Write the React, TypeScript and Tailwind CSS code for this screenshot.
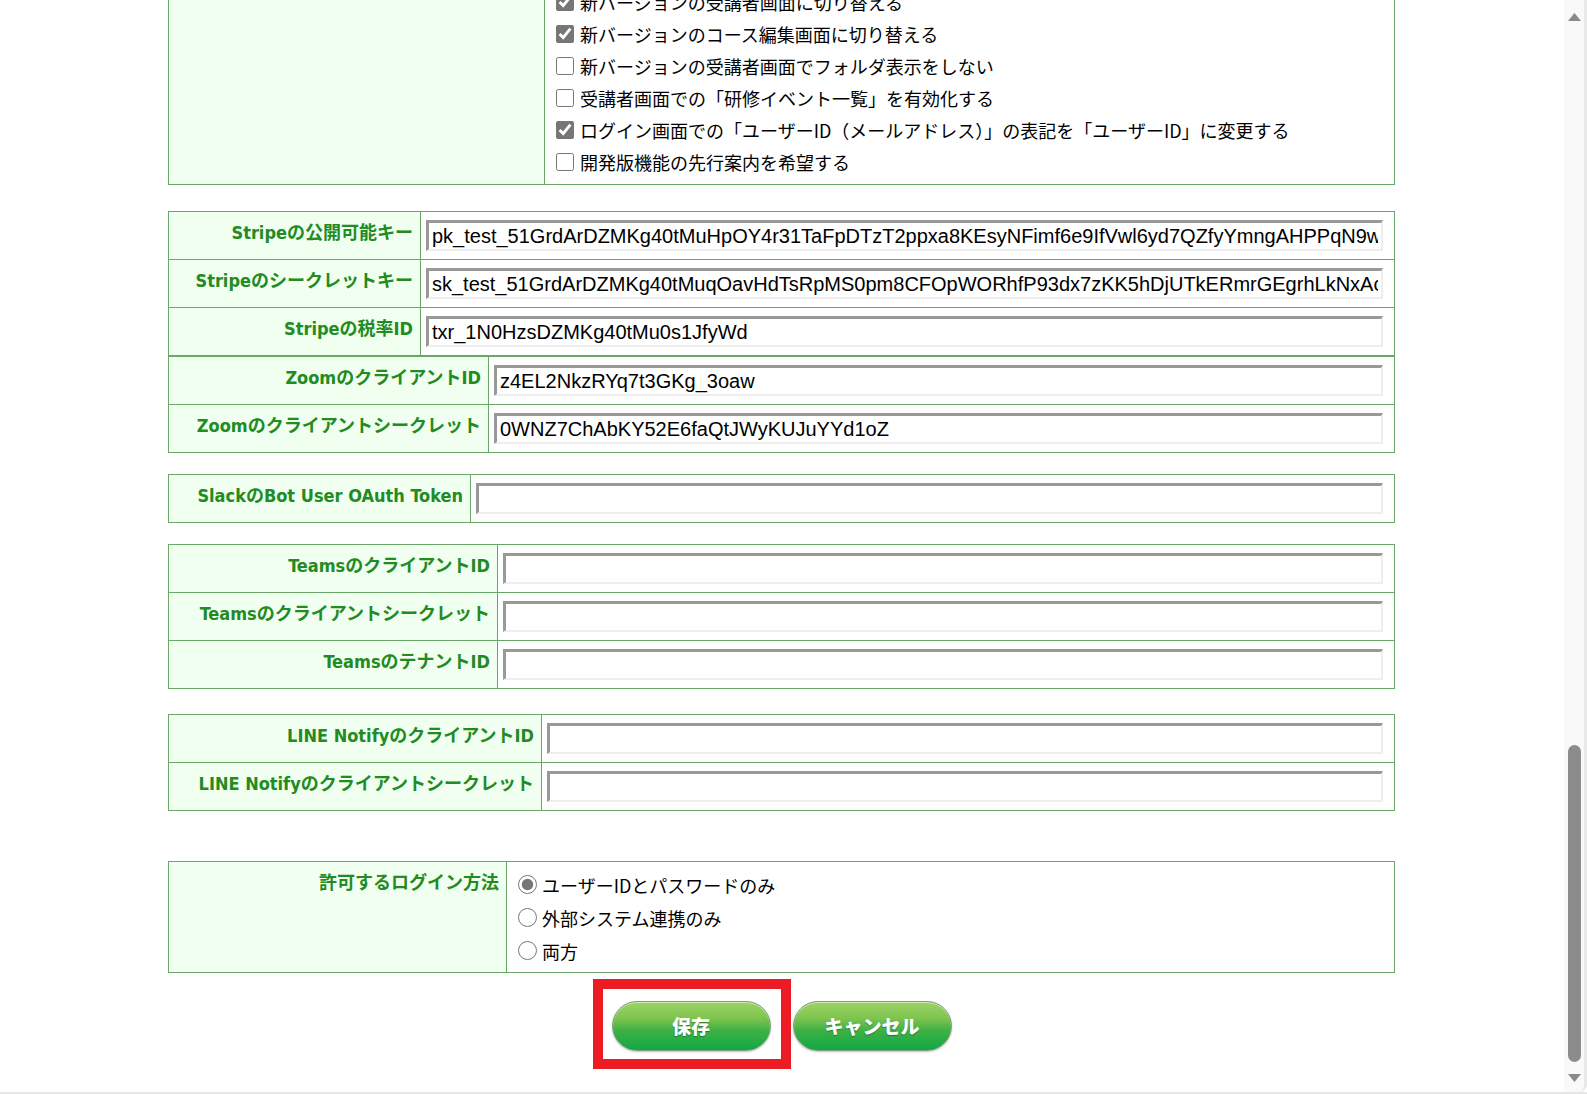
import React from "react";

const jp = "font-['Noto_Sans_CJK_JP','Noto_Sans',sans-serif]";

type Row = { label: string; value: string };

const labelFont =
  "text-[18px] leading-[24px] font-bold text-[#228b22] whitespace-nowrap font-['DejaVu_Sans_Condensed','DejaVu_Sans','Noto_Sans_CJK_JP',sans-serif]";

function FormTable({ labelCls, rows, className = "" }: { labelCls: string; rows: Row[]; className?: string }) {
  return (
    <div className={"w-[1227px] border border-[#6aa86a] " + className}>
      {rows.map((r, i) => (
        <div key={i} className={i > 0 ? "flex border-t border-[#6aa86a]" : "flex"}>
          <div
            className={
              labelCls +
              " shrink-0 bg-[#f0fff0] border-r border-[#6aa86a] pr-[7px] pt-[9px] text-right " +
              labelFont
            }
          >
            {r.label}
          </div>
          <div className="flex-1 min-w-0 pl-[5px] pr-[11px] py-[8px]">
            <input
              type="text"
              defaultValue={r.value}
              className="block w-full h-[31px] bg-white border-t-[3px] border-l-[3px] border-b-2 border-r-2 border-t-[#999] border-l-[#999] border-b-[#eee] border-r-[#eee] px-[3px] text-[20px] leading-[24px] text-black outline-none font-['Liberation_Sans',Arial,sans-serif]"
            />
          </div>
        </div>
      ))}
    </div>
  );
}

function Check({ checked, text }: { checked: boolean; text: string }) {
  return (
    <label className="flex items-center h-[32px] gap-[6px]">
      <input type="checkbox" defaultChecked={checked} className="w-[18px] h-[18px] m-0 accent-[#767676] shrink-0" />
      <span className={"text-[18px] leading-[24px] text-black whitespace-nowrap " + jp}>{text}</span>
    </label>
  );
}

function Radio({ checked, text }: { checked: boolean; text: string }) {
  return (
    <label className="flex items-center h-[33px] gap-[5px]">
      <input type="radio" name="login" defaultChecked={checked} className="w-[19px] h-[19px] m-0 accent-[#767676] shrink-0" />
      <span className={"text-[18px] leading-[24px] text-black whitespace-nowrap " + jp}>{text}</span>
    </label>
  );
}

function PillButton({ text }: { text: string }) {
  return (
    <button
      type="button"
      className={
        "w-[159px] h-[50px] rounded-full border border-[#7f9f7f] bg-[linear-gradient(to_bottom,#9fd366_0%,#7cc44e_35%,#3cb144_60%,#12a747_100%)] shadow-[inset_0_1px_0_rgba(255,255,255,0.5),0_1px_2px_rgba(0,0,0,0.25)] text-white text-[19px] font-black [text-shadow:0_1px_1px_rgba(0,0,0,0.35)] " +
        jp
      }
    >
      {text}
    </button>
  );
}

export default function App() {
  return (
    <div className="w-[1587px] h-[1094px] overflow-hidden bg-white flex border-b-2 border-[#e6e6e6]">
      <div className="flex-1 min-w-0 pl-[168px]">
        {/* Checkbox settings table (scrolled, top cut) */}
        <div className="w-[1227px] -mt-[21px] border border-[#6aa86a] flex">
          <div className="w-[376px] shrink-0 bg-[#f0fff0] border-r border-[#6aa86a]"></div>
          <div className="flex-1 pl-[11px] pt-[6px] pb-[6px]">
            <Check checked text="新バージョンの受講者画面に切り替える" />
            <Check checked text="新バージョンのコース編集画面に切り替える" />
            <Check checked={false} text="新バージョンの受講者画面でフォルダ表示をしない" />
            <Check checked={false} text="受講者画面での「研修イベント一覧」を有効化する" />
            <Check checked text="ログイン画面での「ユーザーID（メールアドレス）」の表記を「ユーザーID」に変更する" />
            <Check checked={false} text="開発版機能の先行案内を希望する" />
          </div>
        </div>

        <FormTable
          className="mt-[26px]"
          labelCls="w-[252px]"
          rows={[
            { label: "Stripeの公開可能キー", value: "pk_test_51GrdArDZMKg40tMuHpOY4r31TaFpDTzT2ppxa8KEsyNFimf6e9IfVwl6yd7QZfyYmngAHPPqN9w00aBcDeFg" },
            { label: "Stripeのシークレットキー", value: "sk_test_51GrdArDZMKg40tMuqOavHdTsRpMS0pm8CFOpWORhfP93dx7zKK5hDjUTkERmrGEgrhLkNxAc00XyZ" },
            { label: "Stripeの税率ID", value: "txr_1N0HzsDZMKg40tMu0s1JfyWd" },
          ]}
        />
        <FormTable
          labelCls="w-[320px]"
          rows={[
            { label: "ZoomのクライアントID", value: "z4EL2NkzRYq7t3GKg_3oaw" },
            { label: "Zoomのクライアントシークレット", value: "0WNZ7ChAbKY52E6faQtJWyKUJuYYd1oZ" },
          ]}
        />
        <FormTable
          className="mt-[21px]"
          labelCls="w-[302px]"
          rows={[{ label: "SlackのBot User OAuth Token", value: "" }]}
        />
        <FormTable
          className="mt-[21px]"
          labelCls="w-[329px]"
          rows={[
            { label: "TeamsのクライアントID", value: "" },
            { label: "Teamsのクライアントシークレット", value: "" },
            { label: "TeamsのテナントID", value: "" },
          ]}
        />
        <FormTable
          className="mt-[25px]"
          labelCls="w-[373px]"
          rows={[
            { label: "LINE NotifyのクライアントID", value: "" },
            { label: "LINE Notifyのクライアントシークレット", value: "" },
          ]}
        />

        {/* Login method */}
        <div className="w-[1227px] mt-[50px] border border-[#6aa86a] flex">
          <div className={"w-[338px] shrink-0 bg-[#f0fff0] border-r border-[#6aa86a] pr-[7px] pt-[9px] text-right " + labelFont}>
            許可するログイン方法
          </div>
          <div className="flex-1 pl-[11px] pt-[6px] pb-[5px]">
            <Radio checked text="ユーザーIDとパスワードのみ" />
            <Radio checked={false} text="外部システム連携のみ" />
            <Radio checked={false} text="両方" />
          </div>
        </div>

        {/* Buttons */}
        <div className="w-[1227px] mt-[28px] flex justify-center gap-[22px]">
          <div className="relative">
            <PillButton text="保存" />
            <div className="absolute -left-[19px] -right-[20px] -top-[22px] -bottom-[18px] border-[10px] border-[#ed1c24] pointer-events-none"></div>
          </div>
          <PillButton text="キャンセル" />
        </div>
      </div>

      {/* Scrollbar */}
      <div className="w-[23px] shrink-0 bg-[#f9f9f9] border-r-[3px] border-[#e8e8e8] rounded-br-[8px] flex flex-col items-center pt-[13px] pb-[10px]">
        <svg width="13" height="8" viewBox="0 0 13 8" className="shrink-0 ml-[1px]">
          <polygon points="6.5,0 13,8 0,8" fill="#8a8a8a" />
        </svg>
        <div className="flex-1"></div>
        <div className="w-[13px] h-[317px] rounded-full bg-[#8c8c8c] ml-[1px]"></div>
        <svg width="13" height="8" viewBox="0 0 13 8" className="shrink-0 mt-[12px] ml-[1px]">
          <polygon points="0,0 13,0 6.5,8" fill="#8a8a8a" />
        </svg>
      </div>
    </div>
  );
}
